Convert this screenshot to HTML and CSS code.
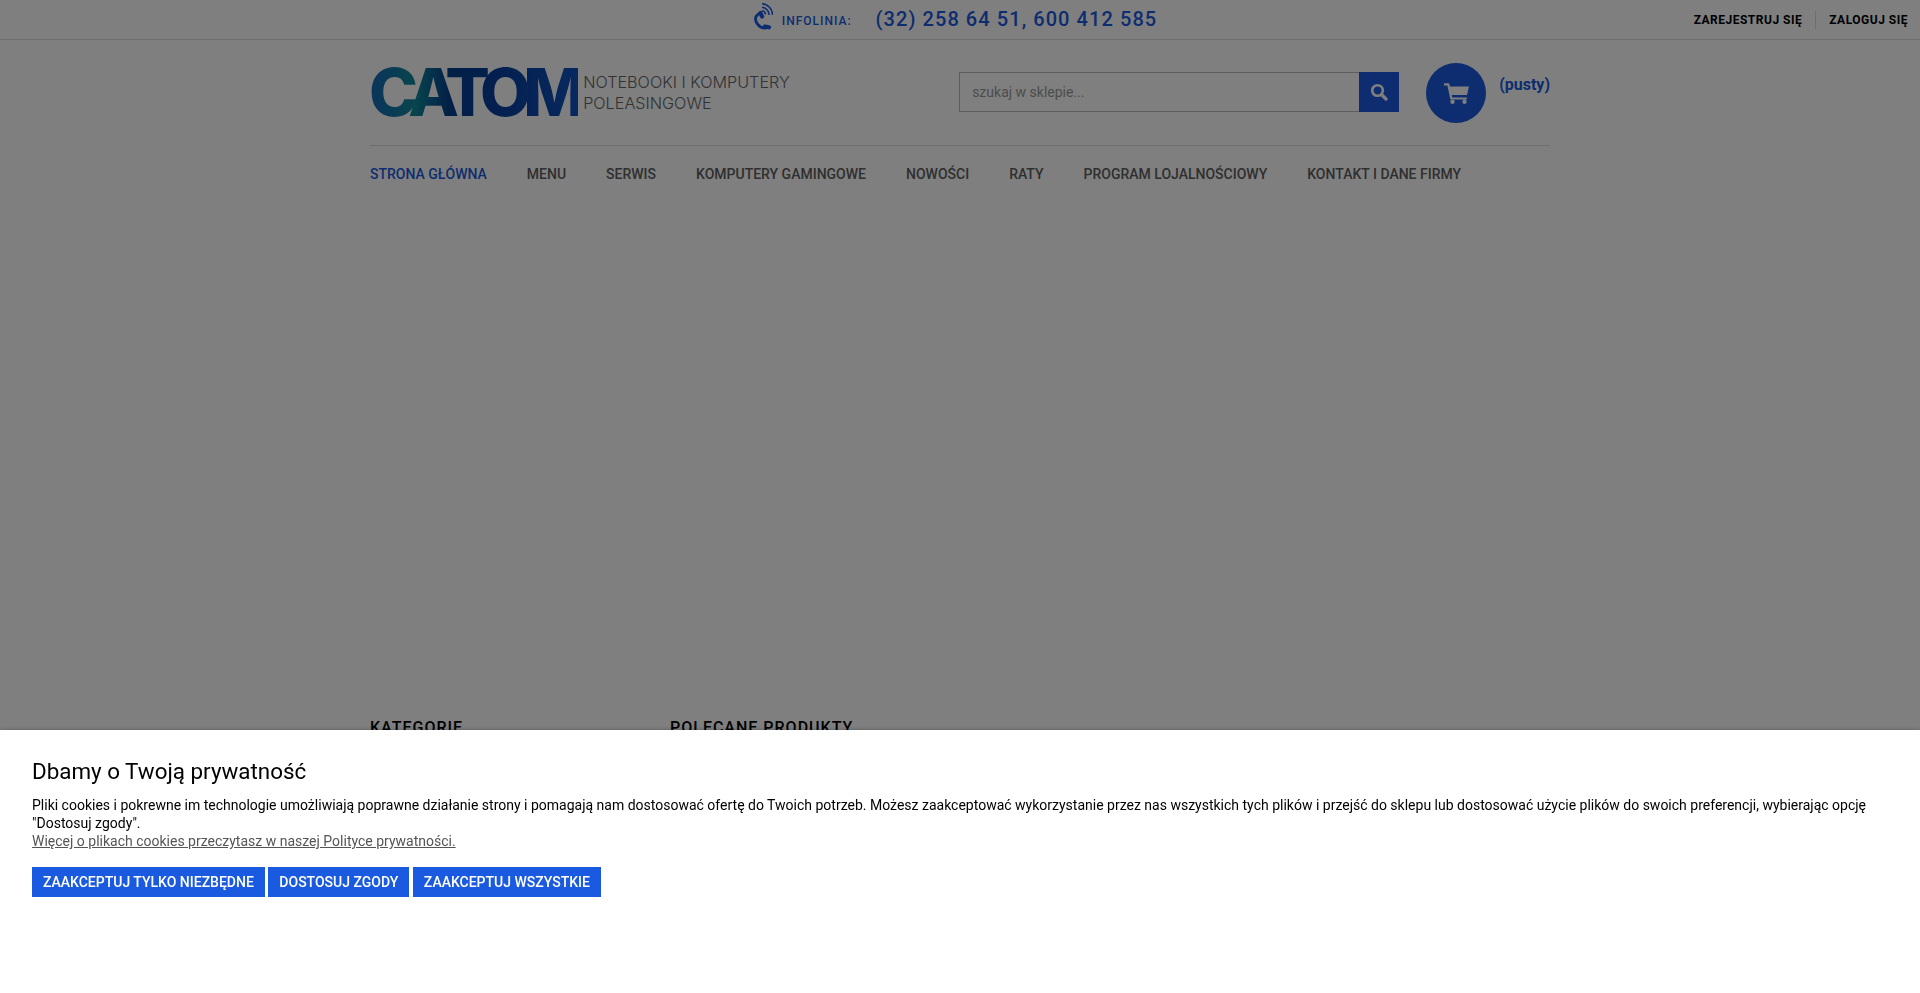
FILE: index.html

```html
<!DOCTYPE html>
<html lang="pl">
<head>
  <meta charset="UTF-8" />
  <title>Catom — notebooki i komputery poleasingowe</title>
  <link rel="stylesheet" href="styles.css">
</head>
<body>
  <div class="topbar">
    <div class="topbar-phone">
      <svg class="phone-icon" viewBox="0 0 19 27" width="19" height="27" aria-hidden="true">
        <g fill="none" stroke="currentColor">
          <path d="M6.500 10C1.500 12 .5 15.500 2.500 19.500 5 24 9 26 14 24.500" stroke-width="2.800"/>
          <path d="M6.500 10 8 13.500M11 23.500 15 24.300" stroke-width="4.200" stroke-linecap="round"/>
          <path d="M8 .8A11 11 0 0 1 18.500 12M8 4.300A7.500 7.500 0 0 1 15 12M8 7.700A4 4 0 0 1 11.500 11.500" stroke-width="1.500"/>
        </g>
      </svg>
      <span class="infolinia">INFOLINIA:</span>
      <a class="phone-numbers" href="#">(32) 258 64 51, 600 412 585</a>
    </div>
    <div class="topbar-links">
      <a href="#">ZAREJESTRUJ SIĘ</a>
      <a href="#">ZALOGUJ SIĘ</a>
    </div>
  </div>

  <div class="container">
    <header>
      <a class="logo" href="#">
        <span class="logo-mark">CATOM</span>
        <span class="logo-text">NOTEBOOKI I KOMPUTERY<br>POLEASINGOWE</span>
      </a>
      <div class="header-right">
        <form class="search">
          <input type="text" placeholder="szukaj w sklepie...">
          <button type="button" aria-label="szukaj">
            <svg viewBox="0 0 18 18" width="18" height="18" aria-hidden="true">
              <circle cx="7.500" cy="7.500" r="5.300" fill="none" stroke="currentColor" stroke-width="2.600"/>
              <path d="M11.500 11.500 16 16" fill="none" stroke="currentColor" stroke-width="3.200" stroke-linecap="round"/>
            </svg>
          </button>
        </form>
        <a class="cart" href="#">
          <span class="cart-circle">
            <svg viewBox="0 0 25 21" width="25" height="21" aria-hidden="true">
              <path d="M5 3.500H25L23 12H7z" fill="currentColor"/>
              <path d="M0 1.300H4.300L7.300 15.500H22" fill="none" stroke="currentColor" stroke-width="2.200" stroke-linecap="round" stroke-linejoin="round"/>
              <circle cx="8.500" cy="18.800" r="2.200" fill="currentColor"/>
              <circle cx="20.500" cy="18.800" r="2.200" fill="currentColor"/>
            </svg>
          </span>
          <span class="cart-label">(pusty)</span>
        </a>
      </div>
    </header>

    <nav>
      <a class="active" href="#">STRONA GŁÓWNA</a>
      <a href="#">MENU</a>
      <a href="#">SERWIS</a>
      <a href="#">KOMPUTERY GAMINGOWE</a>
      <a href="#">NOWOŚCI</a>
      <a href="#">RATY</a>
      <a href="#">PROGRAM LOJALNOŚCIOWY</a>
      <a href="#">KONTAKT I DANE FIRMY</a>
    </nav>

    <div class="slider"></div>

    <div class="columns">
      <h2>KATEGORIE</h2>
      <h2>POLECANE PRODUKTY</h2>
    </div>
  </div>

  <div class="overlay"></div>

  <div class="cookies">
    <h3>Dbamy o Twoją prywatność</h3>
    <p>Pliki cookies i pokrewne im technologie umożliwiają poprawne działanie strony i pomagają nam dostosować ofertę do Twoich potrzeb. Możesz zaakceptować wykorzystanie przez nas wszystkich tych plików i przejść do sklepu lub dostosować użycie plików do swoich preferencji, wybierając opcję "Dostosuj zgody".</p>
    <a class="cookies-more" href="#">Więcej o plikach cookies przeczytasz w naszej Polityce prywatności.</a>
    <div class="cookies-buttons">
      <button>ZAAKCEPTUJ TYLKO NIEZBĘDNE</button>
      <button>DOSTOSUJ ZGODY</button>
      <button>ZAAKCEPTUJ WSZYSTKIE</button>
    </div>
  </div>
</body>
</html>
```

FILE: styles.css

```css
* { margin: 0; padding: 0; box-sizing: border-box; }

body {
  font-family: Roboto, sans-serif;
  background: #fff;
  color: #000;
}

a { text-decoration: none; }

.topbar {
  height: 40px;
  border-bottom: 1px solid #ddd;
  display: grid;
  grid-template-columns: 1fr auto 1fr;
  align-items: center;
  padding-left: 3px;
  padding-right: 12px;
}

.topbar-phone {
  grid-column: 2;
  display: flex;
  align-items: center;
  color: #1a5ae0;
}

.phone-icon {
  margin-right: 9px;
  margin-bottom: 6px;
}

.infolinia {
  font-size: 12px;
  font-weight: 500;
  letter-spacing: 1px;
  margin-right: 24px;
  padding-top: 3px;
}

.phone-numbers {
  color: #1a5ae0;
  font-size: 20px;
  font-weight: 500;
  letter-spacing: 1.07px;
  padding-bottom: 2px;
}

.topbar-links {
  grid-column: 3;
  display: flex;
  justify-content: flex-end;
}

.topbar-links a {
  color: #000;
  font-size: 12px;
  font-weight: 700;
  letter-spacing: .5px;
  padding: 2px 0;
}

.topbar-links a + a {
  margin-left: 13px;
  padding-left: 13px;
  border-left: 1px solid #ddd;
}

.container {
  width: 1180px;
  margin-left: 370px;
}

header {
  height: 106px;
  border-bottom: 1px solid #ddd;
  display: flex;
  justify-content: space-between;
  padding-top: 23px;
}

.logo {
  display: flex;
  align-items: flex-start;
  margin-left: -1px;
}

.logo-mark {
  font-family: Inter, sans-serif;
  font-size: 66px;
  font-weight: 800;
  line-height: 50px;
  letter-spacing: -7.800px;
  background: linear-gradient(90deg, #1668b8 0, #0f8a9a 22%, #06408f 38%, #083f9e 60%, #0f52c0 100%);
  -webkit-background-clip: text;
  background-clip: text;
  color: transparent;
  margin-top: 4px;
}

.logo-text {
  font-family: Inter, sans-serif;
  font-size: 16.200px;
  font-weight: 300;
  line-height: 21px;
  color: #666;
  margin-left: 5.500px;
  margin-top: 9px;
}

.header-right {
  display: flex;
  align-items: flex-start;
}

.search {
  display: flex;
  width: 440px;
  height: 40px;
  margin-top: 9px;
  margin-right: 27px;
}

.search input {
  flex: 1;
  min-width: 0;
  border: 1px solid #bbb;
  border-right: none;
  padding: 0 12px;
  font-family: Roboto, sans-serif;
  font-size: 14px;
  background: #fff;
}

.search input::placeholder {
  color: #999;
  opacity: 1;
}

.search button {
  width: 40px;
  border: none;
  background: #1a5ae0;
  color: #fff;
  display: flex;
  align-items: center;
  justify-content: center;
}

.cart {
  display: flex;
  align-items: flex-start;
}

.cart-circle {
  width: 60px;
  height: 60px;
  border-radius: 50%;
  background: #1a5ae0;
  color: #fff;
  display: flex;
  align-items: center;
  justify-content: center;
}

.cart-label {
  color: #1a5ae0;
  font-size: 16px;
  font-weight: 700;
  margin-left: 13px;
  margin-top: 12px;
}

nav {
  display: flex;
  gap: 40px;
  padding-top: 19px;
  height: 59px;
}

nav a {
  color: #5e5e5e;
  font-size: 14px;
  font-weight: 500;
  line-height: 18px;
}

nav a.active {
  color: #1a5ae0;
}

.slider {
  height: 513px;
}

.columns {
  display: flex;
  height: 40px;
}

.columns h2 {
  font-size: 16px;
  font-weight: 500;
  letter-spacing: 1px;
  line-height: 20px;
  color: #000;
}

.columns h2:first-child {
  width: 300px;
}

.overlay {
  position: fixed;
  inset: 0;
  background: rgba(0,0,0,0.5);
}

.cookies {
  position: fixed;
  left: 0;
  right: 0;
  bottom: 0;
  height: 263px;
  background: #fff;
  box-shadow: 0 0 4px rgba(0,0,0,0.3);
  padding: 27px 32px 0;
}

.cookies h3 {
  font-size: 22.400px;
  font-weight: 400;
  line-height: 28px;
  margin-bottom: 11px;
}

.cookies p {
  font-size: 14px;
  line-height: 18px;
}

.cookies-more {
  display: block;
  font-size: 14px;
  line-height: 18px;
  color: #555;
  text-decoration: underline;
}

.cookies-buttons {
  display: flex;
  gap: 3.500px;
  margin-top: 17px;
}

.cookies-buttons button {
  height: 30px;
  padding: 0 11px;
  border: none;
  background: #1a5ae0;
  color: #fff;
  font-family: Roboto, sans-serif;
  font-size: 14px;
  font-weight: 500;
}
```
